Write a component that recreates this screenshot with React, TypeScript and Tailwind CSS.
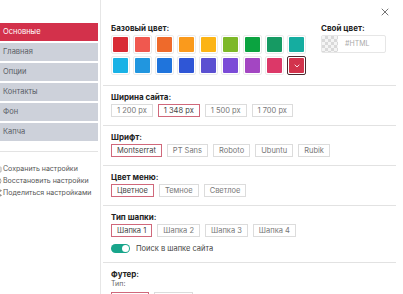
import { X, ChevronDown, Save, RotateCcw, Share2 } from "lucide-react";

const menu = ["Основные", "Главная", "Опции", "Контакты", "Фон", "Капча"];

const colorsTop = ["#d92b35", "#f0584f", "#ee6a2b", "#fa9a1c", "#fcb415", "#7db828", "#0ba340", "#169a63", "#15ada0"];
const colorsBottom = ["#19b2e6", "#2196df", "#1f74dc", "#2f56d6", "#5b50d1", "#7b4bd7", "#a346c2", "#dc3868"];

const Swatch: React.FC<{ color: string }> = ({ color }) => (
  <div className="w-[19px] h-[19px] p-px border border-[#ececec] rounded-[2px]">
    <div className="w-full h-full rounded-[1px]" style={{ backgroundColor: color }} />
  </div>
);

const Option: React.FC<{ label: string; active?: boolean }> = ({ label, active }) => (
  <div
    className={`h-[13px] px-[5px] flex items-center border text-[7.5px] leading-none ${
      active ? "border-[#d0687b] text-[#444]" : "border-[#dcdcdc] text-[#777]"
    }`}
  >
    {label}
  </div>
);

const Section: React.FC<{ title: string; options: string[]; active: number; children?: React.ReactNode }> = ({
  title,
  options,
  active,
  children,
}) => (
  <div className="border-t border-[#e2e2e2] px-[8px] pt-[6px] pb-[8px]">
    <div className="text-[8px] leading-[10px] font-bold text-[#222] mb-[2px]">{title}</div>
    <div className="flex gap-[5px]">
      {options.map((o, i) => (
        <Option key={o} label={o} active={i === active} />
      ))}
    </div>
    {children}
  </div>
);

export default function App() {
  return (
    <div className="w-[403px] h-[294px] overflow-hidden bg-white flex font-['Inter',sans-serif]">
      {/* sidebar */}
      <div className="w-[101px] shrink-0 border-r border-[#e6e6e6] pt-[23px]">
        <div className="w-[98px] flex flex-col gap-[2px]">
          {menu.map((m, i) => (
            <div
              key={m}
              className={`h-[18px] pl-[3px] flex items-center text-[7.5px] ${
                i === 0 ? "bg-[#d3314b] text-white" : "bg-[#cdd1da] text-[#5a5e66]"
              }`}
            >
              {m}
            </div>
          ))}
        </div>
        <div className="w-[98px] mt-[10px] border-t border-[#e3e3e3] pt-[11px] flex flex-col text-[7px] leading-[12px] text-[#555]">
          <div className="flex items-center gap-[1px] -ml-[6px]">
            <Save size={8} strokeWidth={1.5} />
            Сохранить настройки
          </div>
          <div className="flex items-center gap-[1px] -ml-[6px]">
            <RotateCcw size={8} strokeWidth={1.5} />
            Восстановить настройки
          </div>
          <div className="flex items-center gap-[1px] -ml-[6px]">
            <Share2 size={8} strokeWidth={1.5} />
            Поделиться настройками
          </div>
        </div>
      </div>

      {/* main panel */}
      <div className="flex-1 ml-[2px] mr-[7px]">
        <div className="px-[8px] pb-[10px]">
          <div className="h-[23px] flex justify-end pt-[6px] -mr-[3px]">
            <X size={12} strokeWidth={1.5} className="text-[#444]" />
          </div>
          <div className="flex">
            <div>
              <div className="text-[8px] leading-[10px] font-bold text-[#222] mb-[2px]">Базовый цвет:</div>
              <div className="flex flex-col gap-[2px]">
                <div className="flex gap-[3px]">
                  {colorsTop.map((c) => (
                    <Swatch key={c} color={c} />
                  ))}
                </div>
                <div className="flex gap-[3px]">
                  {colorsBottom.map((c) => (
                    <Swatch key={c} color={c} />
                  ))}
                  <div className="w-[19px] h-[19px] p-px border border-[#4a2a30] rounded-[2px]">
                    <div className="w-full h-full rounded-[1px] bg-[#d2334c] flex items-center justify-center">
                      <ChevronDown size={8} strokeWidth={2.5} className="text-white" />
                    </div>
                  </div>
                </div>
              </div>
            </div>
            <div className="ml-[15px] flex-1">
              <div className="text-[8px] leading-[10px] font-bold text-[#222] mb-[2px]">Свой цвет:</div>
              <div className="flex h-[18px] border border-[#e6e6e6] rounded-[2px] mr-[2px]">
                <div className="w-[16px] h-full bg-[repeating-conic-gradient(#d9d9d9_0%_25%,#f4f4f4_0%_50%)] bg-[length:6px_6px]" />
                <div className="pl-[7px] flex items-center text-[7px] text-[#aaa]">#HTML</div>
              </div>
            </div>
          </div>
        </div>

        <Section title="Ширина сайта:" options={["1 200 px", "1 348 px", "1 500 px", "1 700 px"]} active={1} />
        <Section title="Шрифт:" options={["Montserrat", "PT Sans", "Roboto", "Ubuntu", "Rubik"]} active={0} />
        <Section title="Цвет меню:" options={["Цветное", "Темное", "Светлое"]} active={0} />
        <Section title="Тип шапки:" options={["Шапка 1", "Шапка 2", "Шапка 3", "Шапка 4"]} active={0}>
          <div className="mt-[6px] flex items-center gap-[6px]">
            <div className="w-[19px] h-[9px] rounded-full bg-[#18a58b] flex items-center justify-end pr-[1px]">
              <div className="w-[7px] h-[7px] rounded-full bg-white" />
            </div>
            <span className="text-[7.5px] text-[#444]">Поиск в шапке сайта</span>
          </div>
        </Section>
        <div className="border-t border-[#e2e2e2] px-[8px] pt-[6px]">
          <div className="text-[8px] leading-[10px] font-bold text-[#222]">Футер:</div>
          <div className="text-[7px] leading-[10px] text-[#666]">Тип:</div>
          <div className="flex gap-[5px] mt-[3px]">
            <div className="w-[38px] h-[13px] border border-[#d0687b]" />
            <div className="w-[39px] h-[13px] border border-[#dcdcdc]" />
          </div>
        </div>
      </div>
    </div>
  );
}
